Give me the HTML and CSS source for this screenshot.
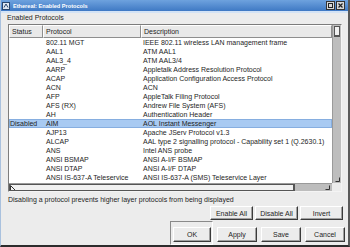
FILE: index.html
```html
<!DOCTYPE html>
<html>
  <head>
    <link rel="stylesheet" href="styles.css">
    <title>Ethereal: Enabled Protocols</title>
  </head>
  <body>
    <div class="window">
      <div class="titlebar">
        <svg class="title-icon" width="8" height="8" viewBox="0 0 8 8">
          <rect x="0.5" y="0.5" width="7" height="7" fill="#dfe7f2" stroke="#28466e"/>
          <path d="M2 5.5 L4 2 L6 5.5" fill="none" stroke="#28466e"/>
        </svg>
        <span class="title-text">Ethereal: Enabled Protocols</span>
        <span class="title-buttons">
          <span class="wm-button"><svg width="7" height="7" viewBox="0 0 7 7"><rect x="1.5" y="1.5" width="4" height="4" fill="none" stroke="#222"/></svg></span>
          <span class="wm-button"><svg width="7" height="7" viewBox="0 0 7 7"><path d="M1.5 1.5 L5.5 5.5 M5.5 1.5 L1.5 5.5" stroke="#222" stroke-width="1.2"/></svg></span>
        </span>
      </div>
      <div class="strip"></div>

      <div class="group">
        <div class="group-label">Enabled Protocols</div>
        <div class="list-frame">
          <div class="list">
            <div class="list-header">
              <div class="head-cell">Status</div>
              <div class="head-cell">Protocol</div>
              <div class="head-cell">Description</div>
            </div>
            <div class="row"><span></span><span>802.11 MGT</span><span>IEEE 802.11 wireless LAN management frame</span></div>
            <div class="row"><span></span><span>AAL1</span><span>ATM AAL1</span></div>
            <div class="row"><span></span><span>AAL3_4</span><span>ATM AAL3/4</span></div>
            <div class="row"><span></span><span>AARP</span><span>Appletalk Address Resolution Protocol</span></div>
            <div class="row"><span></span><span>ACAP</span><span>Application Configuration Access Protocol</span></div>
            <div class="row"><span></span><span>ACN</span><span>ACN</span></div>
            <div class="row"><span></span><span>AFP</span><span>AppleTalk Filing Protocol</span></div>
            <div class="row"><span></span><span>AFS (RX)</span><span>Andrew File System (AFS)</span></div>
            <div class="row"><span></span><span>AH</span><span>Authentication Header</span></div>
            <div class="row selected"><span>Disabled</span><span>AIM</span><span>AOL Instant Messenger</span></div>
            <div class="row"><span></span><span>AJP13</span><span>Apache JServ Protocol v1.3</span></div>
            <div class="row"><span></span><span>ALCAP</span><span>AAL type 2 signalling protocol - Capability set 1 (Q.2630.1)</span></div>
            <div class="row"><span></span><span>ANS</span><span>Intel ANS probe</span></div>
            <div class="row"><span></span><span>ANSI BSMAP</span><span>ANSI A-I/F BSMAP</span></div>
            <div class="row"><span></span><span>ANSI DTAP</span><span>ANSI A-I/F DTAP</span></div>
            <div class="row"><span></span><span>ANSI IS-637-A Teleservice</span><span>ANSI IS-637-A (SMS) Teleservice Layer</span></div>
          </div>
          <div class="vscroll">
            <div class="vthumb"></div>
            <svg class="vscroll-mark" width="5" height="5" viewBox="0 0 5 5"><path d="M4.5 0.5 L4.5 4.5 L0.5 4.5" fill="none" stroke="#333"/></svg>
          </div>
          <div class="hscroll">
            <div class="hthumb">
              <svg width="6" height="6" viewBox="0 0 6 6"><path d="M0.5 0.5 L0.5 5.5 L5.5 5.5 M0.5 0.5 L5.5 5.5" fill="none" stroke="#333"/></svg>
            </div>
            <svg class="hscroll-mark" width="5" height="5" viewBox="0 0 5 5"><path d="M4.5 0.5 L4.5 4.5 L0.5 4.5" fill="none" stroke="#333"/></svg>
          </div>
          <div class="corner"></div>
        </div>
        <div class="hint">Disabling a protocol prevents higher layer protocols from being displayed</div>
        <div class="list-buttons">
          <button class="gtk-button wide">Enable All</button>
          <button class="gtk-button wide">Disable All</button>
          <button class="gtk-button wide">Invert</button>
        </div>
      </div>

      <div class="actions">
        <div class="default-frame"><button class="gtk-button">OK</button></div>
        <button class="gtk-button">Apply</button>
        <button class="gtk-button">Save</button>
        <button class="gtk-button">Cancel</button>
      </div>
    </div>
  </body>
</html>
```

FILE: styles.css
```css
body {
  margin: 0;
  font-family: "Liberation Sans", Arial, sans-serif;
  font-size: 7px;
  color: #1e1e1e;
  background: #ececec;
}

.window {
  width: 350px;
  height: 247px;
  box-sizing: border-box;
  background: #ececec;
  border-left: 1px solid #a9c1de;
  border-right: 2px solid #5a5a5a;
  border-bottom: 2px solid #2c2c2c;
  display: flex;
  flex-direction: column;
  overflow: hidden;
}

.titlebar {
  height: 11px;
  flex: none;
  display: flex;
  align-items: center;
  gap: 3px;
  padding: 0 3px 0 1px;
  background: linear-gradient(#6ea2de, #3f79c4);
  color: white;
  font-size: 5.6px;
  font-weight: bold;
}

.title-icon {
  display: block;
}

.title-buttons {
  margin-left: auto;
  display: flex;
  gap: 1px;
}

.wm-button {
  width: 7px;
  height: 7px;
  background: #d8d8d8;
  border: 0.5px solid #333;
  display: flex;
}

.strip {
  height: 2px;
  flex: none;
  background: #d4e3f5;
}

.group {
  padding: 0 0 0 7px;
  display: flex;
  flex-direction: column;
}

.group-label {
  height: 10px;
  line-height: 10px;
  margin-left: -1px;
}

.list-frame {
  margin-top: 1px;
  width: 334px;
  height: 168px;
  box-sizing: border-box;
  border: 1px solid #7c7c7c;
  border-right-color: #f4f4f4;
  border-bottom-color: #f4f4f4;
  background: white;
  display: grid;
  grid-template-columns: 1fr 9px;
  grid-template-rows: 1fr 8px;
}

.list {
  overflow: hidden;
}

.list-header,
.row {
  display: grid;
  grid-template-columns: 34px 98px 1fr;
}

.list-header {
  height: 13px;
}

.head-cell {
  background: #e9e9e9;
  border-top: 1px solid white;
  border-left: 1px solid white;
  border-right: 1px solid #8e8e8e;
  border-bottom: 1px solid #8e8e8e;
  padding-left: 2px;
  line-height: 11px;
}

.row {
  height: 9px;
  line-height: 9px;
  white-space: nowrap;
}

.row span:nth-child(1) {
  padding-left: 1px;
}

.row span:nth-child(2) {
  padding-left: 3px;
}

.row span:nth-child(3) {
  padding-left: 2px;
}

.row.selected {
  background: #a8caf2;
  box-shadow: inset 0 0 0 1px #86aee0;
}

.vscroll {
  background: #bdbdbd;
  border-left: 1px solid #9a9a9a;
  position: relative;
}

.vthumb {
  height: 11px;
  margin: 1px 1px 0 1px;
  background: #f1f1f1;
  border: 1px solid #555;
  box-sizing: border-box;
  border-bottom-width: 2px;
}

.vscroll-mark {
  position: absolute;
  right: 1px;
  bottom: 1px;
}

.hscroll {
  background: #bdbdbd;
  border-top: 1px solid #9a9a9a;
  position: relative;
  display: flex;
}

.hthumb {
  width: 286px;
  background: #f1f1f1;
  border: 1px solid #555;
  border-right-width: 2px;
  box-sizing: border-box;
  display: flex;
  align-items: center;
  overflow: hidden;
}

.hthumb svg {
  display: block;
}

.hscroll-mark {
  position: absolute;
  right: 2px;
  bottom: 1px;
}

.corner {
  background: #ececec;
}

.hint {
  margin-top: 3px;
  line-height: 9px;
  white-space: nowrap;
}

.list-buttons {
  margin-top: 2px;
  display: flex;
  justify-content: flex-end;
  gap: 2px;
  padding-right: 5px;
}

.gtk-button {
  width: 40px;
  height: 15px;
  padding: 0;
  font-family: "Liberation Sans", Arial, sans-serif;
  font-size: 7px;
  color: #1e1e1e;
  background: #ececec;
  border: 1px solid;
  border-color: white #3a3a3a #3a3a3a white;
  box-shadow: inset -1px -1px 0 #a0a0a0;
}

.gtk-button.wide {
  width: 43px;
  height: 14px;
}

.actions {
  margin-top: 1px;
  flex: 1;
  display: flex;
  justify-content: flex-end;
  align-items: flex-start;
  gap: 4px;
  padding-right: 3px;
}

.actions > .gtk-button {
  margin-top: 6px;
}

.default-frame {
  width: 43px;
  height: 24px;
  box-sizing: border-box;
  border: 1px solid;
  border-color: #8a8a8a white white #8a8a8a;
  padding: 5px 0 0 2px;
}

.default-frame .gtk-button {
  width: 38px;
}
```
